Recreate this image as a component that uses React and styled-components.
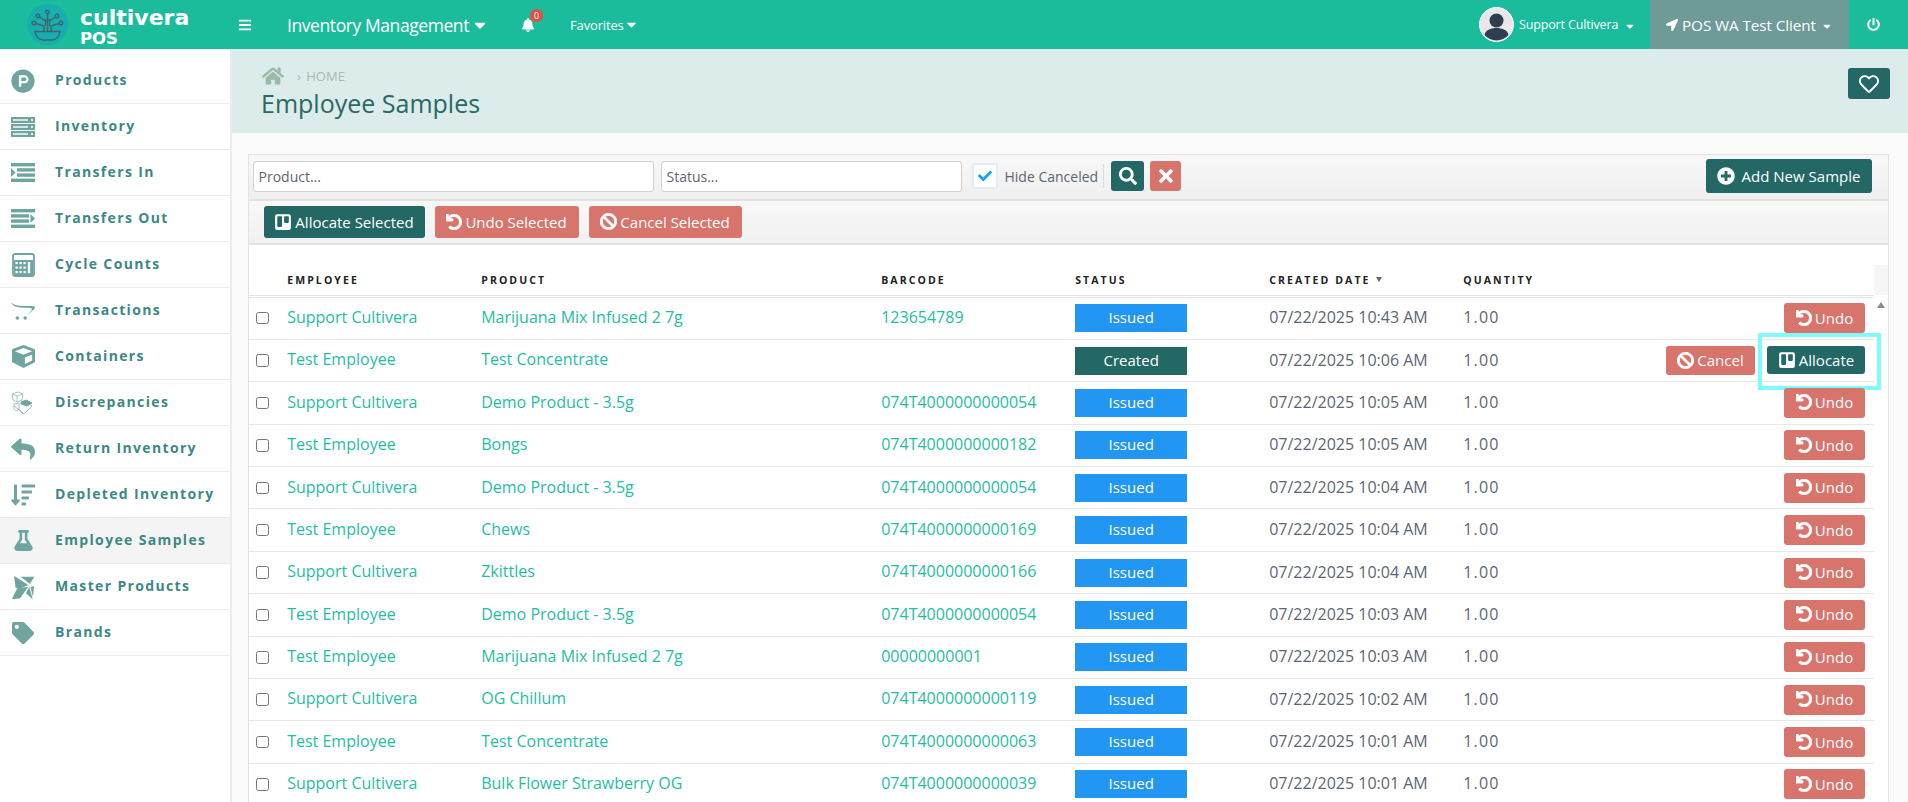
import React from 'react';
import styled, { createGlobalStyle } from 'styled-components';
import {
  FaBars, FaBell, FaCaretDown, FaLocationArrow, FaPowerOff, FaHome, FaRegHeart, FaSearch, FaTimes,
  FaPlusCircle, FaTrello, FaUndo, FaBan, FaCheck, FaProductHunt,
  FaOpencart, FaCube, FaReply, FaSortAmountDown, FaFlask, FaTag, FaSortDown,
} from 'react-icons/fa';

const Global = createGlobalStyle`
  html, body { margin: 0; height: 100%; overflow: hidden; background: #fafafa; }
  body { font-family: "Open Sans", "Liberation Sans", sans-serif; color: #555; }
  * { box-sizing: border-box; }
`;

const Shell = styled.div`display: flex; flex-direction: column; height: 100vh; overflow: hidden;`;

const TopBar = styled.header`
  display: flex; align-items: center; height: 49px; flex: none; background: #1abc9c; color: #fff;
`;
const LogoBlock = styled.div`display: flex; align-items: center; width: 238px; padding-left: 27px; gap: 12px; flex: none;`;
const LogoWords = styled.div`display: flex; flex-direction: column; padding-top: 4px;`;
const LogoName = styled.span`font-family: "DejaVu Sans", sans-serif; font-weight: 700; font-size: 22px; line-height: 24px;`;
const LogoPos = styled.span`font-family: "DejaVu Sans", sans-serif; font-weight: 700; font-size: 16.5px; line-height: 18px;`;
const Burger = styled.span`display: flex; width: 49px; font-size: 14px;`;
const ModuleMenu = styled.span`display: flex; align-items: center; gap: 2px; font-size: 17.5px; letter-spacing: -0.42px; width: 233px;`;
const BellWrap = styled.span`position: relative; display: flex; font-size: 14px; width: 50px; padding-left: 1px;`;
const BellBadge = styled.span`
  position: absolute; left: 10px; top: -9px; width: 13px; height: 13px; border-radius: 50%;
  background: #e74c3c; font-size: 9px; line-height: 13px; text-align: center;
`;
const FavMenu = styled.span`display: flex; align-items: center; gap: 0; font-size: 13px; letter-spacing: -0.15px;`;
const TopSpacer = styled.div`flex: 1;`;
const UserMenu = styled.span`display: flex; align-items: center; gap: 5px; font-size: 12.5px; letter-spacing: -0.15px; width: 171px;`;
const Avatar = styled.svg`width: 35px; height: 35px; flex: none;`;
const Caret = styled(FaSortDown)`font-size: 12px; margin-left: 1px; position: relative; top: -1px;`;
const ClientMenu = styled.div`
  display: flex; align-items: center; justify-content: center; gap: 4px; width: 199px; height: 49px;
  background: #6e9a97; font-size: 15.3px; letter-spacing: -0.1px;
`;
const PowerBtn = styled.span`display: flex; justify-content: center; width: 59px; padding-right: 10px; font-size: 13px;`;

const Body = styled.div`display: flex; flex: 1; min-height: 0;`;
const Sidebar = styled.nav`
  width: 232px; flex: none; background: #fff; border-right: 2px solid #e7edf0; padding-top: 9px;
`;
const SideItem = styled.div`
  display: flex; align-items: center; height: 46px; border-bottom: 1.5px solid #ebebeb; padding-left: 11px;
  background: ${p => (p.$active ? '#f4f4f4' : '#fff')};
`;
const SideIcon = styled.span`
  display: flex; align-items: center; justify-content: center; width: 24px; height: 24px; margin-right: 20px;
  color: #6fa5a0; font-size: ${p => p.$size || 24}px; flex: none;
`;
const SideLabel = styled.span`font-size: 14px; font-weight: 700; letter-spacing: 1.35px; color: #3c8885; padding-bottom: 1.4px;`;

const Main = styled.main`flex: 1; min-width: 0; display: flex; flex-direction: column;`;
const PageHead = styled.div`
  position: relative; height: 84px; flex: none; background: #dcecea; padding: 16px 0 0 29px;
`;
const Crumbs = styled.div`display: flex; align-items: center; height: 22px; color: #a5bbb1; font-size: 13px; word-spacing: 2px;`;
const HomeIcon = styled(FaHome)`font-size: 22px; color: #9db9a9; margin: 0 13px 0 1px;`;
const Title = styled.h1`margin: 0; font-size: 25px; font-weight: 400; color: #2a6864; line-height: 32px;`;
const HeartBtn = styled.span`
  position: absolute; right: 18px; top: 19px; display: flex; align-items: center; justify-content: center;
  width: 42px; height: 31px; border-radius: 3px; background: #236864; color: #fff; font-size: 20px;
`;

const Card = styled.section`
  flex: 1; min-height: 0; margin: 21px 19px 0 16px; border: 1.5px solid #e2e2e2; border-bottom: 0; background: #fff; overflow: hidden;
`;
const FilterBar = styled.div`
  display: flex; align-items: center; height: 45.5px; padding: 0 16.5px 1px 3.5px; border-bottom: 2px solid #e2e2e2;
  background: linear-gradient(#f8f8f8, #efefef);
`;
const TextBox = styled.div`
  display: flex; align-items: center; height: 31px; width: ${p => p.$w}px; margin-right: 7px; padding-left: 5px;
  background: #fff; border: 1px solid #cfcfcf; border-radius: 3px; font-size: 14px; color: #5f6472;
`;
const CheckBox = styled.span`
  display: flex; align-items: center; justify-content: center; width: 26px; height: 26px; margin-left: 3px;
  background: #fff; border: 2px solid #e4ecf2; border-radius: 2px; color: #1ba1f2; font-size: 14px;
`;
const CheckLabel = styled.span`margin-left: 7px; font-size: 14px; color: #5f6472;`;
const Divider = styled.span`width: 1px; height: 24px; margin: 0 7px 0 5px; background: #d5dde0;`;
const Btn = styled.span`
  display: inline-flex; align-items: center; justify-content: center; gap: ${p => p.$gap ?? 3}px; flex: none;
  width: ${p => (p.$w ? `${p.$w}px` : 'auto')}; height: ${p => p.$h || 30}px; margin-left: ${p => p.$ml || 0}px;
  background: ${p => (p.$tone === 'red' ? '#d7746c' : '#236864')};
  color: #fff; border-radius: 3px; font-size: ${p => p.$fs || 15}px; white-space: nowrap;
`;
const BoldUndo = styled(FaUndo)`stroke: currentColor; stroke-width: 28px;`;
const BoldBan = styled(FaBan)`stroke: currentColor; stroke-width: 24px;`;
const AddBtnSlot = styled.div`margin-left: auto;`;
const BulkBar = styled.div`
  display: flex; align-items: center; gap: 10px; height: 44px; padding-left: 14.5px; border-bottom: 2px solid #e2e2e2;
  background: linear-gradient(#f8f8f8, #f1f1f1);
`;
const TableArea = styled.div`display: flex;`;
const TableMain = styled.div`flex: 1; min-width: 0;`;
const ScrollCol = styled.div`width: 14px; flex: none; padding-top: 20px;`;
const ScrollHead = styled.div`height: 30px; background: #f5f5f5;`;
const ScrollArrow = styled.div`
  width: 0; height: 0; margin: 7px auto 0; border-left: 4.5px solid transparent; border-right: 4.5px solid transparent;
  border-bottom: 6px solid #8a8a8a;
`;
const cols = '38.2px 194px 400px 194px 194px 194px 1fr';
const HeadRow = styled.div`
  display: grid; grid-template-columns: ${cols}; align-items: center; height: 53px; padding: 20px 0 0;
  border-bottom: 3px double #e4e4e4;
`;
const HeadCell = styled.span`
  font-size: 10.5px; font-weight: 700; letter-spacing: 2.1px; color: #222; display: flex; align-items: center; gap: 5px;
`;
const SortMark = styled.span`
  width: 0; height: 0; border-left: 3.5px solid transparent; border-right: 3.5px solid transparent; border-top: 5px solid #666;
`;
const Row = styled.div`
  display: grid; grid-template-columns: ${cols}; align-items: center; height: 42.4px; border-bottom: 1.5px solid #e8e8e8;
  font-size: 16px;
`;
const RowCheck = styled.span`
  display: block; width: 12.5px; height: 12.5px; margin-left: 7px; border: 1px solid #767676; border-radius: 2.5px; background: #fff;
`;
const LinkText = styled.span`color: #1fbda2; white-space: nowrap; padding-bottom: 2.5px;`;
const Plain = styled.span`color: #5c6672; font-size: 16px; letter-spacing: ${p => p.$ls || 0}px; padding-bottom: 2px;`;
const Badge = styled.span`
  display: block; width: 112px; height: 28px; line-height: 27px; text-align: center; color: #fff; font-size: 15px;
  background: ${p => (p.$kind === 'Created' ? '#236864' : '#2196f3')};
`;
const LastCell = styled.div`display: grid; grid-template-columns: 1fr auto; align-items: center;`;
const Actions = styled.div`
  position: relative; display: flex; justify-content: flex-end; gap: 12px; padding-right: 9px;
  & > span { padding-bottom: 1px; }
`;
const Highlight = styled.div`
  position: absolute; right: -7px; top: -13px; width: 123px; height: 56.5px; border: 4px solid #7dfbff; pointer-events: none;
`;

const DiscIcon = () => (
  <svg width="24" height="24" viewBox="0 0 24 24" fill="none" stroke="#9ac0bc" strokeWidth="0.9">
    <path d="M1 3l6-2 5 2-1 6-5 2-4-2z" />
    <path d="M1 3l5 2 6-2M6 5v6" />
    <path d="M3 13l5-1v6l-3 2-2-2z" />
    <path d="M8 18l5 5 8-8-4-3-6 1" />
    <path d="M10 11l5-2 6 3-5 3-6-2z" fill="#6fa5a0" stroke="#6fa5a0" />
    <path d="M3 15l4 3 5 5" />
  </svg>
);
const PinwheelIcon = () => (
  <svg width="24" height="24" viewBox="0 0 24 24" fill="currentColor">
    <path d="M3 .7l14.3 9.3-7.6 3.3h-5z" />
    <path d="M9.7 1.7h13.6l-4.3 7.3z" />
    <path d="M.7 24.3l5.6-11 11-1.6L9 23.3z" />
    <path d="M15 18.3l3.3-6.6 3.4 12.6z" />
    <path d="M19.5 12l3.5-1-1 11z" />
  </svg>
);
const ServerIcon = () => (
  <svg width="24" height="20" viewBox="0 0 24 20">
    {[0, 7, 14].map(y => (
      <g key={y}>
        <rect y={y} width="24" height="6" fill="currentColor" />
        <rect x="2" y={y + 2.3} width="15" height="1.4" fill="#fff" />
        <circle cx="21" cy={y + 3} r="1.1" fill="#fff" />
      </g>
    ))}
  </svg>
);
const IndentIcon = ({ out }) => (
  <svg width="24" height="19" viewBox="0 0 24 19" fill="currentColor">
    <rect width="24" height="3.4" />
    <rect y="15.6" width="24" height="3.4" />
    {out ? (
      <>
        <rect y="5.2" width="18" height="3.4" />
        <rect y="10.4" width="18" height="3.4" />
        <path d="M19.5 5l4.5 4.5-4.5 4.5z" />
      </>
    ) : (
      <>
        <rect x="6" y="5.2" width="18" height="3.4" />
        <rect x="6" y="10.4" width="18" height="3.4" />
        <path d="M0 5l4.5 4.5L0 14z" />
      </>
    )}
  </svg>
);
const CalcIcon = () => (
  <svg width="23" height="24" viewBox="0 0 23 24">
    <rect x="1" y="1" width="21" height="22" rx="2" fill="#fff" stroke="currentColor" strokeWidth="1.8" />
    <rect x="2" y="7" width="19" height="15" fill="currentColor" />
    {[9, 13.5, 18].map(y => [3.5, 7.5, 11.5].map(x => (
      <rect key={`${x}-${y}`} x={x} y={y} width="2.2" height="2.2" fill="#fff" />
    )))}
    <rect x="15.8" y="9" width="2.4" height="11.2" fill="#fff" />
  </svg>
);
const nav = [
  ['Products', <FaProductHunt />], ['Inventory', <ServerIcon />], ['Transfers In', <IndentIcon />],
  ['Transfers Out', <IndentIcon out />], ['Cycle Counts', <CalcIcon />], ['Transactions', <FaOpencart size={26} />],
  ['Containers', <FaCube size={23} />], ['Discrepancies', <DiscIcon />], ['Return Inventory', <FaReply />],
  ['Depleted Inventory', <FaSortAmountDown />], ['Employee Samples', <FaFlask size={21} />],
  ['Master Products', <PinwheelIcon />], ['Brands', <FaTag size={22} />],
];
const S = 'Support Cultivera', T = 'Test Employee', D = 'Demo Product - 3.5g', M = 'Marijuana Mix Infused 2 7g';
const P = '074T4000000000';
const rows = [
  [S, M, '123654789', 'Issued', '10:43'],
  [T, 'Test Concentrate', '', 'Created', '10:06'],
  [S, D, P + '054', 'Issued', '10:05'],
  [T, 'Bongs', P + '182', 'Issued', '10:05'],
  [S, D, P + '054', 'Issued', '10:04'],
  [T, 'Chews', P + '169', 'Issued', '10:04'],
  [S, 'Zkittles', P + '166', 'Issued', '10:04'],
  [T, D, P + '054', 'Issued', '10:03'],
  [T, M, '00000000001', 'Issued', '10:03'],
  [S, 'OG Chillum', P + '119', 'Issued', '10:02'],
  [T, 'Test Concentrate', P + '063', 'Issued', '10:01'],
  [S, 'Bulk Flower Strawberry OG', P + '039', 'Issued', '10:01'],
];

export default function App() {
  return (
    <Shell>
      <Global />
      <TopBar>
        <LogoBlock>
          <svg width="41" height="41" viewBox="0 0 41 41" fill="none" stroke="#3f6764" strokeWidth="1.4">
            <circle cx="20.5" cy="20.5" r="20.5" fill="#16aeb0" stroke="none" />
            <path d="M8 27.5h25c-.5 5-4 8.500-8 8.500h-9c-4 0-7.500-3.500-8-8.500z" />
            <path d="M20.500 27V10M17 27v-5l-8-2.500M24 27v-5l8-2.500M18.500 22v-5l-6-4M22.500 22v-5l6-4M17 16h7" />
            <circle cx="20.500" cy="8" r="1.800" /><circle cx="7" cy="19" r="1.800" /><circle cx="34" cy="19" r="1.800" />
            <circle cx="11" cy="12" r="1.800" /><circle cx="30" cy="12" r="1.800" />
          </svg>
          <LogoWords>
            <LogoName>cultivera</LogoName>
            <LogoPos>POS</LogoPos>
          </LogoWords>
        </LogoBlock>
        <Burger><FaBars /></Burger>
        <ModuleMenu>Inventory Management<FaCaretDown size={18} /></ModuleMenu>
        <BellWrap><FaBell /><BellBadge>0</BellBadge></BellWrap>
        <FavMenu>Favorites<FaCaretDown size={15} /></FavMenu>
        <TopSpacer />
        <UserMenu>
          <Avatar viewBox="0 0 35 35">
            <circle cx="17.5" cy="17.5" r="17" fill="#e8e8e8" stroke="#fff" strokeWidth="1" />
            <circle cx="17.5" cy="13.5" r="7" fill="#2e3d50" />
            <path d="M5.5 28c1-5 6-7 12-7s11 2 12 7a16 16 0 0 1-24 0z" fill="#2e3d50" />
          </Avatar>
          Support Cultivera<Caret />
        </UserMenu>
        <ClientMenu><FaLocationArrow size={12} />POS WA Test Client<Caret /></ClientMenu>
        <PowerBtn><FaPowerOff /></PowerBtn>
      </TopBar>
      <Body>
        <Sidebar>
          {nav.map(([label, icon]) => (
            <SideItem key={label} $active={label === 'Employee Samples'}>
              <SideIcon>{icon}</SideIcon>
              <SideLabel>{label}</SideLabel>
            </SideItem>
          ))}
        </Sidebar>
        <Main>
          <PageHead>
            <Crumbs><HomeIcon />› HOME</Crumbs>
            <Title>Employee Samples</Title>
            <HeartBtn><FaRegHeart /></HeartBtn>
          </PageHead>
          <Card>
            <FilterBar>
              <TextBox $w={401}>Product...</TextBox>
              <TextBox $w={301}>Status...</TextBox>
              <CheckBox><FaCheck /></CheckBox>
              <CheckLabel>Hide Canceled</CheckLabel>
              <Divider />
              <Btn $w={33} $fs={18}><FaSearch /></Btn>
              <Btn $w={31} $ml={6} $tone="red" $fs={20}><FaTimes /></Btn>
              <AddBtnSlot>
                <Btn $w={166} $h={34} $gap={7} $fs={15}><FaPlusCircle size={18} />Add New Sample</Btn>
              </AddBtnSlot>
            </FilterBar>
            <BulkBar>
              <Btn $w={161} $h={32}><FaTrello size={18} />Allocate Selected</Btn>
              <Btn $w={144} $h={32} $tone="red"><BoldUndo size={16} />Undo Selected</Btn>
              <Btn $w={153} $h={32} $tone="red"><BoldBan size={17} />Cancel Selected</Btn>
            </BulkBar>
            <TableArea>
              <TableMain>
                <HeadRow>
                  <span />
                  <HeadCell>EMPLOYEE</HeadCell>
                  <HeadCell>PRODUCT</HeadCell>
                  <HeadCell>BARCODE</HeadCell>
                  <HeadCell>STATUS</HeadCell>
                  <HeadCell>CREATED DATE<SortMark /></HeadCell>
                  <HeadCell>QUANTITY</HeadCell>
                </HeadRow>
                {rows.map((r, i) => (
                  <Row key={i}>
                    <RowCheck />
                    <LinkText>{r[0]}</LinkText>
                    <LinkText>{r[1]}</LinkText>
                    <LinkText>{r[2]}</LinkText>
                    <Badge $kind={r[3]}>{r[3]}</Badge>
                    <Plain>07/22/2025 {r[4]} AM</Plain>
                    <LastCell>
                      <Plain $ls={1.2}>1.00</Plain>
                      {r[3] === 'Created' ? (
                        <Actions>
                          <Btn $w={89} $h={29} $tone="red"><BoldBan size={17} />Cancel</Btn>
                          <Btn $w={98} $h={28}><FaTrello size={18} />Allocate</Btn>
                          <Highlight />
                        </Actions>
                      ) : (
                        <Actions><Btn $w={81} $h={30} $tone="red"><BoldUndo size={16} />Undo</Btn></Actions>
                      )}
                    </LastCell>
                  </Row>
                ))}
              </TableMain>
              <ScrollCol><ScrollHead /><ScrollArrow /></ScrollCol>
            </TableArea>
          </Card>
        </Main>
      </Body>
    </Shell>
  );
}
